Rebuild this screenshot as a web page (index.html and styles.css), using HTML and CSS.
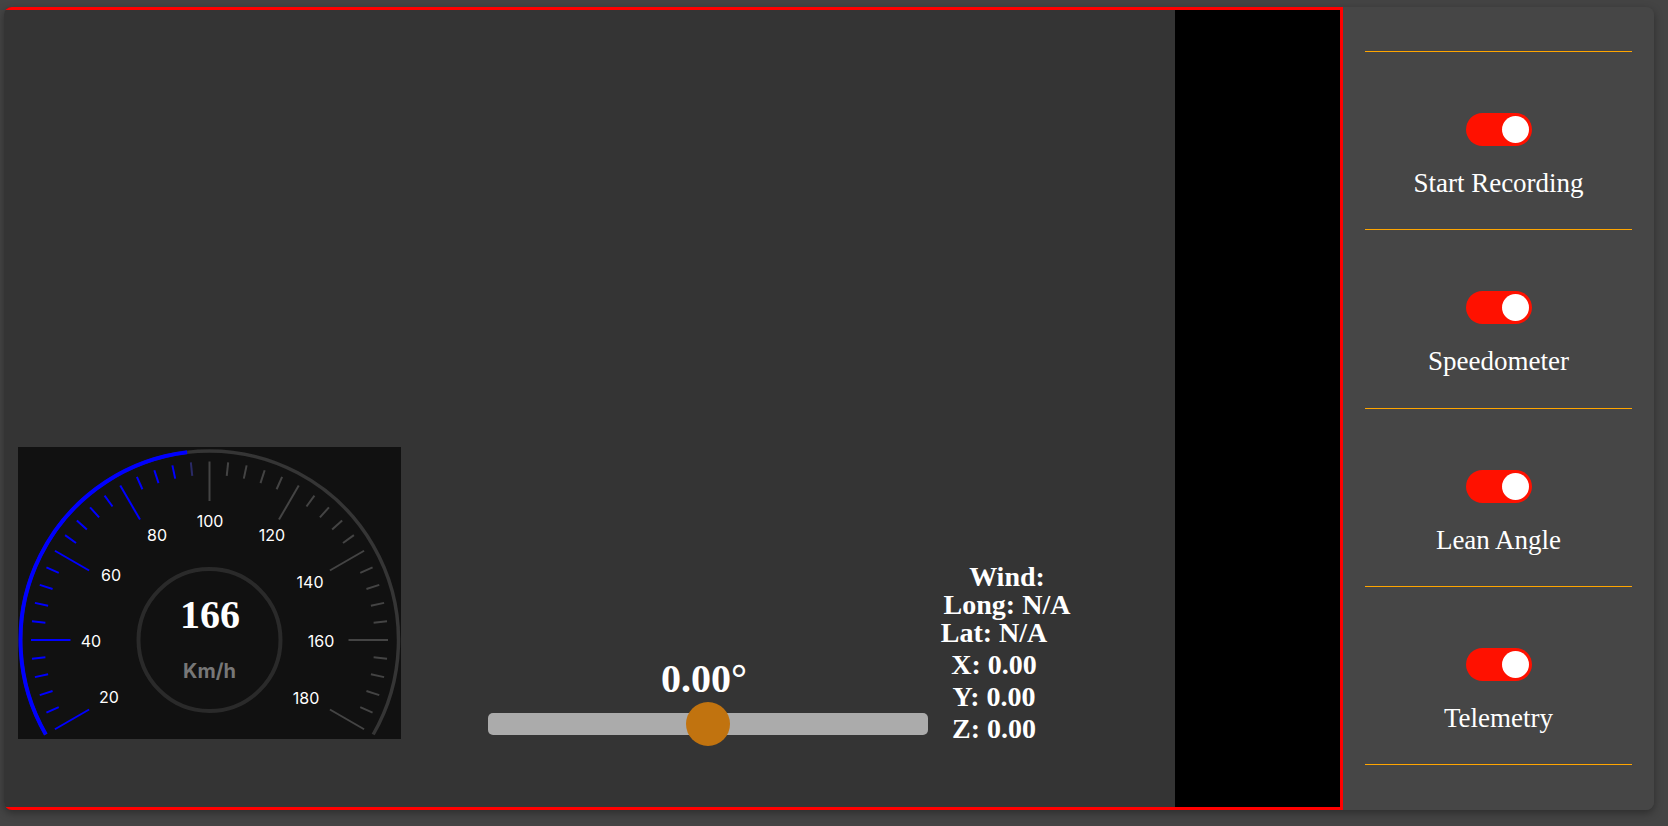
FILE: index.html
```html
<!DOCTYPE html>
<html lang="en">
<head>
<meta charset="utf-8">
<title>Dashboard</title>
<link rel="stylesheet" href="styles.css">
</head>
<body>
<div class="card">
  <div class="main">
    <div class="stage">
      <svg class="gauge" viewBox="0 0 383 292" width="383" height="292">
        <defs>
          <line id="tick-minor" x1="0" y1="-178.5" x2="0" y2="-165"></line>
          <line id="tick-major" x1="0" y1="-178.5" x2="0" y2="-139"></line>
        </defs>
        <path class="arc-track" d="M 27.82 287.5 A 189 189 0 1 1 355.18 287.5"></path>
        <path class="arc-value" d="M 27.82 287.5 A 189 189 0 0 1 169.1 5.33"></path>
        <circle class="hub" cx="191.5" cy="193" r="71"></circle>
        <g class="ticks" transform="translate(191.5 193)">
          <use href="#tick-major" class="on" transform="rotate(-120)"></use>
          <use href="#tick-minor" class="on" transform="rotate(-114)"></use>
          <use href="#tick-minor" class="on" transform="rotate(-108)"></use>
          <use href="#tick-minor" class="on" transform="rotate(-102)"></use>
          <use href="#tick-minor" class="on" transform="rotate(-96)"></use>
          <use href="#tick-major" class="on" transform="rotate(-90)"></use>
          <use href="#tick-minor" class="on" transform="rotate(-84)"></use>
          <use href="#tick-minor" class="on" transform="rotate(-78)"></use>
          <use href="#tick-minor" class="on" transform="rotate(-72)"></use>
          <use href="#tick-minor" class="on" transform="rotate(-66)"></use>
          <use href="#tick-major" class="on" transform="rotate(-60)"></use>
          <use href="#tick-minor" class="on" transform="rotate(-54)"></use>
          <use href="#tick-minor" class="on" transform="rotate(-48)"></use>
          <use href="#tick-minor" class="on" transform="rotate(-42)"></use>
          <use href="#tick-minor" class="on" transform="rotate(-36)"></use>
          <use href="#tick-major" class="on" transform="rotate(-30)"></use>
          <use href="#tick-minor" class="on" transform="rotate(-24)"></use>
          <use href="#tick-minor" class="on" transform="rotate(-18)"></use>
          <use href="#tick-minor" class="on" transform="rotate(-12)"></use>
          <use href="#tick-minor" class="dim" transform="rotate(-6)"></use>
          <use href="#tick-major" class="off" transform="rotate(0)"></use>
          <use href="#tick-minor" class="off" transform="rotate(6)"></use>
          <use href="#tick-minor" class="off" transform="rotate(12)"></use>
          <use href="#tick-minor" class="off" transform="rotate(18)"></use>
          <use href="#tick-minor" class="off" transform="rotate(24)"></use>
          <use href="#tick-major" class="off" transform="rotate(30)"></use>
          <use href="#tick-minor" class="off" transform="rotate(36)"></use>
          <use href="#tick-minor" class="off" transform="rotate(42)"></use>
          <use href="#tick-minor" class="off" transform="rotate(48)"></use>
          <use href="#tick-minor" class="off" transform="rotate(54)"></use>
          <use href="#tick-major" class="off" transform="rotate(60)"></use>
          <use href="#tick-minor" class="off" transform="rotate(66)"></use>
          <use href="#tick-minor" class="off" transform="rotate(72)"></use>
          <use href="#tick-minor" class="off" transform="rotate(78)"></use>
          <use href="#tick-minor" class="off" transform="rotate(84)"></use>
          <use href="#tick-major" class="off" transform="rotate(90)"></use>
          <use href="#tick-minor" class="off" transform="rotate(96)"></use>
          <use href="#tick-minor" class="off" transform="rotate(102)"></use>
          <use href="#tick-minor" class="off" transform="rotate(108)"></use>
          <use href="#tick-minor" class="off" transform="rotate(114)"></use>
          <use href="#tick-major" class="off" transform="rotate(120)"></use>
        </g>
        <g class="labels">
          <text x="91" y="256">20</text>
          <text x="73" y="200">40</text>
          <text x="93" y="134">60</text>
          <text x="139" y="93.5">80</text>
          <text x="192" y="80">100</text>
          <text x="254" y="94">120</text>
          <text x="292" y="141">140</text>
          <text x="303" y="200">160</text>
          <text x="288" y="257">180</text>
        </g>
        <text class="speed" x="192" y="181">166</text>
        <text class="unit" x="191.5" y="231">Km/h</text>
      </svg>

      <div class="lean">
        <div class="lean-value">0.00°</div>
        <div class="track"><div class="thumb"></div></div>
      </div>

      <div class="readout">
        <div class="geo">
          <div>Wind:</div>
          <div>Long: N/A</div>
          <div class="shift">Lat: N/A</div>
        </div>
        <div class="axes shift">
          <div>X: 0.00</div>
          <div>Y: 0.00</div>
          <div>Z: 0.00</div>
        </div>
      </div>
    </div>
    <div class="screen"></div>
  </div>

  <aside class="sidebar">
    <div class="rule"></div>
    <div class="option">
      <div class="switch"><div class="knob"></div></div>
      <div class="option-label">Start Recording</div>
    </div>
    <div class="rule"></div>
    <div class="option">
      <div class="switch"><div class="knob"></div></div>
      <div class="option-label">Speedometer</div>
    </div>
    <div class="rule"></div>
    <div class="option">
      <div class="switch"><div class="knob"></div></div>
      <div class="option-label">Lean Angle</div>
    </div>
    <div class="rule"></div>
    <div class="option">
      <div class="switch"><div class="knob"></div></div>
      <div class="option-label">Telemetry</div>
    </div>
    <div class="rule"></div>
  </aside>
</div>
</body>
</html>
```

FILE: styles.css
```css
* {
  box-sizing: border-box;
}

html,
body {
  margin: 0;
}

body {
  width: 1668px;
  height: 826px;
  padding: 7px 14px 16px 4px;
  background: #444444;
  color: #ffffff;
  font-family: "Liberation Serif", "Times New Roman", serif;
  overflow: hidden;
}

.card {
  display: flex;
  width: 1650px;
  height: 803px;
  border-radius: 8px;
  overflow: hidden;
  box-shadow: 0 3px 8px rgba(0, 0, 0, 0.35);
}

.main {
  flex: 0 0 1339px;
  display: flex;
  background: #343434;
  border: 3px solid #ff0000;
  border-left: 0;
}

.stage {
  flex: 1;
  display: flex;
  align-items: flex-end;
  padding: 0 0 62px 14px;
}

.gauge {
  flex: none;
  display: block;
  width: 383px;
  height: 292px;
  margin-bottom: 6px;
  background: #111111;
}

.arc-track {
  fill: none;
  stroke: #353535;
  stroke-width: 3.5;
}

.arc-value {
  fill: none;
  stroke: #0000ff;
  stroke-width: 4;
}

.hub {
  fill: none;
  stroke: #2a2a2a;
  stroke-width: 4;
}

.ticks use {
  stroke-width: 2;
}

.ticks .on {
  stroke: #0000ff;
}

.ticks .dim {
  stroke: #2a2a66;
}

.ticks .off {
  stroke: #444444;
}

.labels text {
  fill: #ffffff;
  font-family: Inter, "Noto Sans", sans-serif;
  font-size: 16px;
  text-anchor: middle;
}

.speed {
  fill: #ffffff;
  font-family: "Liberation Serif", serif;
  font-size: 40px;
  font-weight: bold;
  text-anchor: middle;
}

.unit {
  fill: #777777;
  font-family: Inter, "Noto Sans", sans-serif;
  font-size: 20px;
  font-weight: bold;
  text-anchor: middle;
}

.lean {
  flex: none;
  width: 440px;
  margin: 0 0 10px 87px;
}

.lean-value {
  font-size: 40px;
  font-weight: bold;
  line-height: 46px;
  text-align: center;
  padding-right: 8px;
  margin-bottom: 11px;
}

.track {
  position: relative;
  height: 22px;
  background: #ababab;
  border-radius: 5px;
}

.thumb {
  position: absolute;
  left: 50%;
  top: 50%;
  width: 44px;
  height: 44px;
  margin: -22px 0 0 -22px;
  border-radius: 50%;
  background: #c1730f;
}

.readout {
  flex: none;
  width: 134px;
  margin-left: 12px;
  font-size: 28px;
  font-weight: bold;
  text-align: center;
}

.geo {
  line-height: 28px;
}

.shift {
  padding-right: 26px;
}

.axes {
  margin-top: 2px;
  line-height: 32px;
}

.screen {
  flex: none;
  width: 165px;
  background: #000000;
}

.sidebar {
  flex: 1;
  background: #464646;
  padding: 44px 22px 0;
}

.rule {
  height: 1px;
  background: #ffa500;
}

.option {
  display: flex;
  flex-direction: column;
  align-items: center;
  padding: 61px 0 30.25px;
}

.switch {
  display: flex;
  justify-content: flex-end;
  align-items: center;
  width: 66px;
  height: 33px;
  padding: 3px;
  border-radius: 17px;
  background: #ff1100;
}

.knob {
  width: 27px;
  height: 27px;
  border-radius: 50%;
  background: #ffffff;
}

.option-label {
  margin-top: 22px;
  font-size: 27px;
  line-height: 31px;
}
```
